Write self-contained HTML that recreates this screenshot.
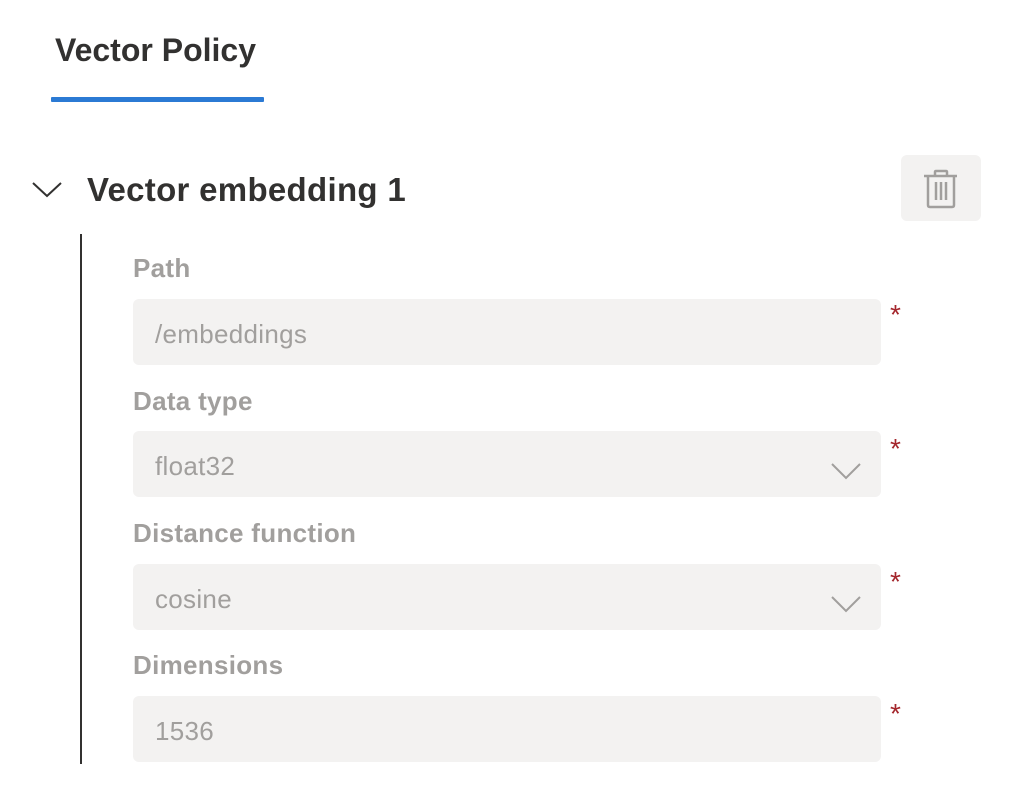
<!DOCTYPE html>
<html><head><style>
body{margin:0;width:1018px;height:786px;background:#fff;font-family:"Segoe UI","Liberation Sans",sans-serif;position:relative;overflow:hidden}
.a{position:absolute}
.tab{left:55px;top:32px;font-size:32px;font-weight:600;color:#323130}
.ul{left:51px;top:97px;width:213px;height:5px;background:#2b7ad4;border-radius:1px}
.title{left:87px;top:171px;font-size:33px;font-weight:600;color:#323130;letter-spacing:0.3px}
.del{left:901px;top:155px;width:80px;height:66px;background:#f3f2f1;border-radius:6px}
.vl{left:80px;top:234px;width:2px;height:530px;background:#323130}
.lab{left:133px;font-size:26px;font-weight:600;color:#a19f9d;letter-spacing:0.3px}
.inp{left:133px;width:748px;height:66px;background:#f3f2f1;border-radius:6px}
.val{left:155px;font-size:26px;color:#a19f9d;letter-spacing:0.3px}
.ast{left:890px;font-size:28px;color:#a4262c}
</style></head><body>
<div class="a tab">Vector Policy</div>
<div class="a ul"></div>
<svg class="a" style="left:30px;top:178px" width="34" height="22"><polyline points="3,5 17,18 31,5" fill="none" stroke="#323130" stroke-width="2"/></svg>
<div class="a title">Vector embedding 1</div>
<div class="a del"><svg width="80" height="66"><g fill="none" stroke="#a19f9d" stroke-width="2.5"><path d="M23 21H56M34 21V17Q34 16 35 16H45Q46 16 46 17V21M27 21V50Q27 52 29 52H51Q53 52 53 50V21M35 27V45M40 27V45M45 27V45"/></g></svg></div>
<div class="a vl"></div>

<div class="a lab" style="top:253px">Path</div>
<div class="a inp" style="top:299px"></div>
<div class="a val" style="top:319px">/embeddings</div>
<div class="a ast" style="top:299px">*</div>

<div class="a lab" style="top:386px">Data type</div>
<div class="a inp" style="top:431px"></div>
<div class="a val" style="top:451px">float32</div>
<div class="a ast" style="top:433px">*</div>
<svg class="a" style="left:828px;top:458px" width="38" height="26"><polyline points="4,6 18,20 32,6" fill="none" stroke="#a19f9d" stroke-width="2"/></svg>

<div class="a lab" style="top:518px">Distance function</div>
<div class="a inp" style="top:564px"></div>
<div class="a val" style="top:584px">cosine</div>
<div class="a ast" style="top:566px">*</div>
<svg class="a" style="left:828px;top:591px" width="38" height="26"><polyline points="4,6 18,20 32,6" fill="none" stroke="#a19f9d" stroke-width="2"/></svg>

<div class="a lab" style="top:650px">Dimensions</div>
<div class="a inp" style="top:696px"></div>
<div class="a val" style="top:716px">1536</div>
<div class="a ast" style="top:698px">*</div>
</body></html>
